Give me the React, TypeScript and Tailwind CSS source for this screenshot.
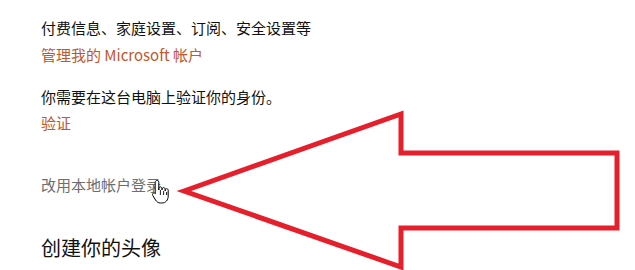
const font = { fontFamily: '"Noto Sans CJK SC", "Noto Sans", sans-serif' };

function HandCursor() {
  return (
    <svg className="absolute left-[151px] top-[179px]" width="20" height="26" viewBox="0 0 20 26">
      <path
        d="M6 1.5c1 0 1.8.8 1.8 1.8V11V9.5c0-1 .8-1.6 1.6-1.6s1.6.7 1.6 1.6V11V10.2c0-1 .8-1.6 1.6-1.6s1.6.7 1.6 1.6V12V11.2c0-.9.7-1.5 1.5-1.5s1.5.6 1.5 1.5V17c0 4-2.4 7-6.5 7H9.5c-2.4 0-3.7-1.2-5-3L1.8 16.5c-.6-1-.3-2 .5-2.4.8-.5 1.7-.2 2.2.6L4.2 14.6V3.3C4.2 2.3 5 1.5 6 1.5z"
        fill="#fff"
        stroke="#000"
        strokeWidth="1"
        strokeLinejoin="round"
      />
      <path d="M9.4 11v5M12.6 12v4M15.6 13v3" stroke="#000" strokeWidth="0.9" />
    </svg>
  );
}

function Arrow() {
  return (
    <svg className="pointer-events-none absolute left-0 top-0" width="635" height="270" viewBox="0 0 635 270">
      <polygon
        points="184,191 401,114 401,153 617,153 617,228 401,228 401,267"
        fill="none"
        stroke="#e51f2b"
        strokeWidth="5"
        strokeLinejoin="miter"
      />
    </svg>
  );
}

export default function App() {
  return (
    <div className="relative h-[270px] w-[635px] overflow-hidden bg-white" style={font}>
      <div className="flex flex-col pl-[41px] pt-[18px]">
        <p className="text-[15px] leading-[20px] text-[#111]">付费信息、家庭设置、订阅、安全设置等</p>
        <a className="mt-[7px] text-[15px] leading-[20px] text-[#c2562e]">管理我的 Microsoft 帐户</a>
        <p className="mt-[22px] text-[15px] leading-[20px] text-[#111]">你需要在这台电脑上验证你的身份。</p>
        <a className="mt-[6px] text-[15px] leading-[20px] text-[#c2562e]">验证</a>
        <a className="mt-[42px] text-[15px] leading-[20px] text-[#6e6e6e]">改用本地帐户登录</a>
        <h2 className="mt-[39px] text-[20px] leading-[28px] text-[#111]">创建你的头像</h2>
      </div>
      <HandCursor />
      <Arrow />
    </div>
  );
}
